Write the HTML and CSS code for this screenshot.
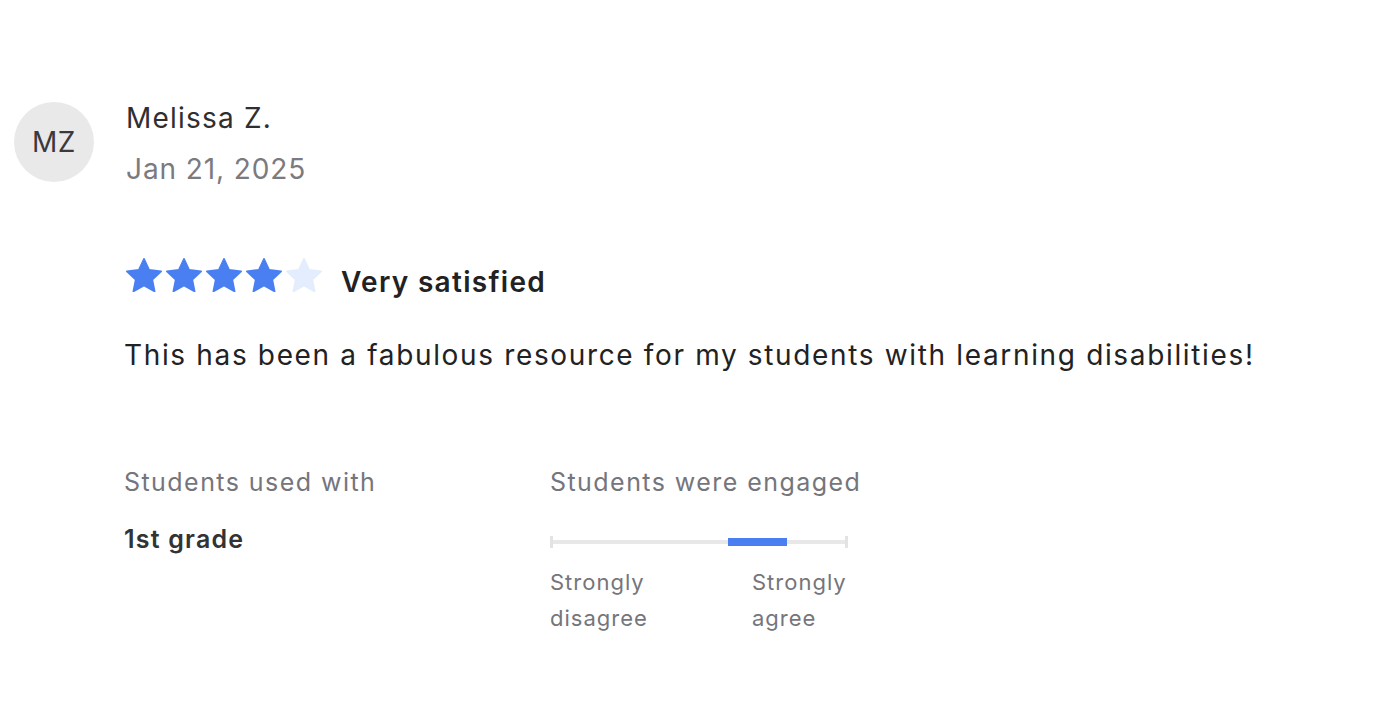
FILE: index.html
```html
<!DOCTYPE html>
<html>
<head>
<meta charset="utf-8">
<link rel="stylesheet" href="styles.css">
</head>
<body>
<div class="review">
  <div class="header">
    <div class="avatar">MZ</div>
    <div class="who">
      <div class="name">Melissa Z.</div>
      <div class="date">Jan 21, 2025</div>
    </div>
  </div>
  <div class="body">
    <div class="rating">
      <div class="stars">
        <svg class="star on" viewBox="1.2 1.3 21.6 20.6"><path d="M12 1.8l3.1 6.6 7.2.9-5.3 5 1.4 7.1L12 17.9l-6.4 3.5L7 14.3l-5.3-5 7.2-.9z"/></svg>
        <svg class="star on" viewBox="1.2 1.3 21.6 20.6"><path d="M12 1.8l3.1 6.6 7.2.9-5.3 5 1.4 7.1L12 17.9l-6.4 3.5L7 14.3l-5.3-5 7.2-.9z"/></svg>
        <svg class="star on" viewBox="1.2 1.3 21.6 20.6"><path d="M12 1.8l3.1 6.6 7.2.9-5.3 5 1.4 7.1L12 17.9l-6.4 3.5L7 14.3l-5.3-5 7.2-.9z"/></svg>
        <svg class="star on" viewBox="1.2 1.3 21.6 20.6"><path d="M12 1.8l3.1 6.6 7.2.9-5.3 5 1.4 7.1L12 17.9l-6.4 3.5L7 14.3l-5.3-5 7.2-.9z"/></svg>
        <svg class="star off" viewBox="1.2 1.3 21.6 20.6"><path d="M12 1.8l3.1 6.6 7.2.9-5.3 5 1.4 7.1L12 17.9l-6.4 3.5L7 14.3l-5.3-5 7.2-.9z"/></svg>
      </div>
      <span class="label">Very satisfied</span>
    </div>
    <p class="text">This has been a fabulous resource for my students with learning disabilities!</p>
    <div class="facts">
      <div class="fact used">
        <div class="fact-title">Students used with</div>
        <div class="fact-value">1st grade</div>
      </div>
      <div class="fact engaged">
        <div class="fact-title">Students were engaged</div>
        <div class="scale">
          <div class="track"><div class="fill"></div></div>
        </div>
        <div class="scale-labels">
          <span>Strongly<br>disagree</span>
          <span>Strongly<br>agree</span>
        </div>
      </div>
    </div>
  </div>
</div>
</body>
</html>
```
FILE: styles.css
```css
* { box-sizing: border-box; }
html, body { margin: 0; padding: 0; background: #fff; }
body { font-family: Inter, "Noto Sans", sans-serif; color: #222; }
.review { padding: 100px 0 0 14px; }
.header { display: flex; align-items: flex-start; gap: 32px; }
.avatar {
  width: 80px; height: 80px; border-radius: 50%;
  background: #e9e9e9; color: #3a3a3e;
  display: flex; align-items: center; justify-content: center;
  font-size: 28px; margin-top: 2px; letter-spacing: 0.5px;
}
.name { font-size: 28px; line-height: 36px; color: #2f2f33; letter-spacing: 1.2px; }
.date { font-size: 28px; line-height: 36px; margin-top: 15px; color: #7a7a80; letter-spacing: 0.9px; }
.body { padding-left: 112px; }
.rating { display: flex; align-items: center; margin-top: 68px; height: 40px; }
.stars { display: flex; gap: 4px; }
.star { width: 36px; height: 34.3px; display: block; stroke-width: 1; stroke-linejoin: round; }
.star.on { fill: #4a7ff2; stroke: #4a7ff2; }
.star.off { fill: #e3edfd; stroke: #e3edfd; }
.label { font-size: 28px; font-weight: 600; margin-left: 19px; margin-top: 14px; color: #222; letter-spacing: 1.3px; }
.text { font-size: 28px; line-height: 40px; margin: 40px 0 0 -2px; color: #222; letter-spacing: 1.65px; }
.facts { display: flex; margin-top: 90px; margin-left: -2px; }
.fact.used { width: 426px; }
.fact-title { font-size: 25px; line-height: 34px; color: #75757c; letter-spacing: 1.45px; }
.fact-value { font-size: 25px; font-weight: 600; line-height: 34px; margin-top: 23px; color: #333; letter-spacing: 1.2px; }
.scale { width: 298px; margin-top: 37px; height: 12px; position: relative;
  border-left: 3px solid #e3e3e3; border-right: 3px solid #e3e3e3; }
.track { position: absolute; left: 0; right: 0; top: 4px; height: 4px; background: #e8e8e8; }
.fill { position: absolute; left: 175px; width: 59px; top: -2px; height: 8px; background: #4a7ff2; }
.scale-labels { display: flex; margin-top: 16px; font-size: 22px; line-height: 36px; color: #75757c; letter-spacing: 1px; }
.scale-labels span { width: 202px; }
```
